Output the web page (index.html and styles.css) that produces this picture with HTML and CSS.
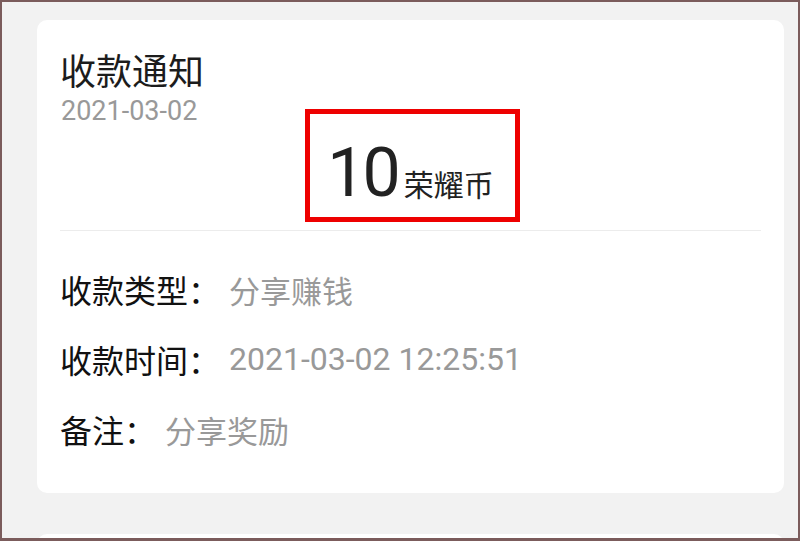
FILE: index.html
```html
<!DOCTYPE html>
<html lang="zh">

<head>
    <meta charset="UTF-8">
    <meta name="viewport" content="width=device-width, initial-scale=1.0">
    <title>收款通知</title>
    <link rel="stylesheet" href="styles.css">
</head>

<body>
    <div class="frame">
        <div class="card">
            <div class="card-head">
                <div class="title">收款通知</div>
                <div class="date">2021-03-02</div>
            </div>

            <div class="amount-wrap">
                <div class="amount">
                    <span class="amount-num">10</span><span class="amount-unit">荣耀币</span>
                </div>
            </div>

            <div class="divider"></div>

            <div class="info-list">
                <div class="info-row">
                    <span class="label">收款类型：</span>
                    <span class="value">分享赚钱</span>
                </div>
                <div class="info-row">
                    <span class="label">收款时间：</span>
                    <span class="value num">2021-03-02 12:25:51</span>
                </div>
                <div class="info-row">
                    <span class="label">备注：</span>
                    <span class="value">分享奖励</span>
                </div>
            </div>
        </div>

        <div class="card card-next"></div>
    </div>
</body>

</html>
```

FILE: styles.css
```css
/* 页面外框 */
html,
body {
    margin: 0;
    padding: 0;
}

body {
    font-family: Roboto, 'Noto Sans CJK SC', sans-serif;
    background-color: #f2f2f2;
}

.frame {
    box-sizing: border-box;
    height: 541px;
    overflow: hidden;
    border: 2px solid #7b5c5c;
    border-bottom-width: 3px;
    padding: 18px 14px 0 35px;
    background-color: #f2f2f2;
}

.card {
    background-color: #fff;
    border-radius: 10px;
    padding: 31px 23px 29px 23px;
    margin-bottom: 41px;
}

.card-next {
    height: 200px;
}

.title {
    font-size: 36px;
    line-height: 44px;
    color: #1c1c1c;
}

.date {
    font-size: 27px;
    line-height: 32px;
    color: #999;
    padding-left: 1px;
}

/* 金额 */
.amount-wrap {
    display: flex;
    justify-content: center;
    margin-top: -18px;
}

.amount {
    box-sizing: border-box;
    height: 113px;
    margin-left: 4px;
    padding: 24px 21px 0 17px;
    border: 5px solid #ee0000;
    display: flex;
    align-items: baseline;
}

.amount-num {
    font-size: 68px;
    line-height: 70px;
    letter-spacing: -3px;
    color: #222;
    margin-right: 6px;
}

.amount-unit {
    font-size: 30px;
    color: #222;
}

.divider {
    height: 1px;
    background-color: #ececec;
    margin-top: 8px;
}

.info-list {
    padding-top: 23px;
}

.info-row {
    display: flex;
    align-items: center;
    height: 70px;
}

.label {
    font-size: 32px;
    color: #111;
}

.value {
    font-size: 31px;
    color: #999;
    margin-left: 9px;
}

.value.num {
    font-size: 32px;
}
```
